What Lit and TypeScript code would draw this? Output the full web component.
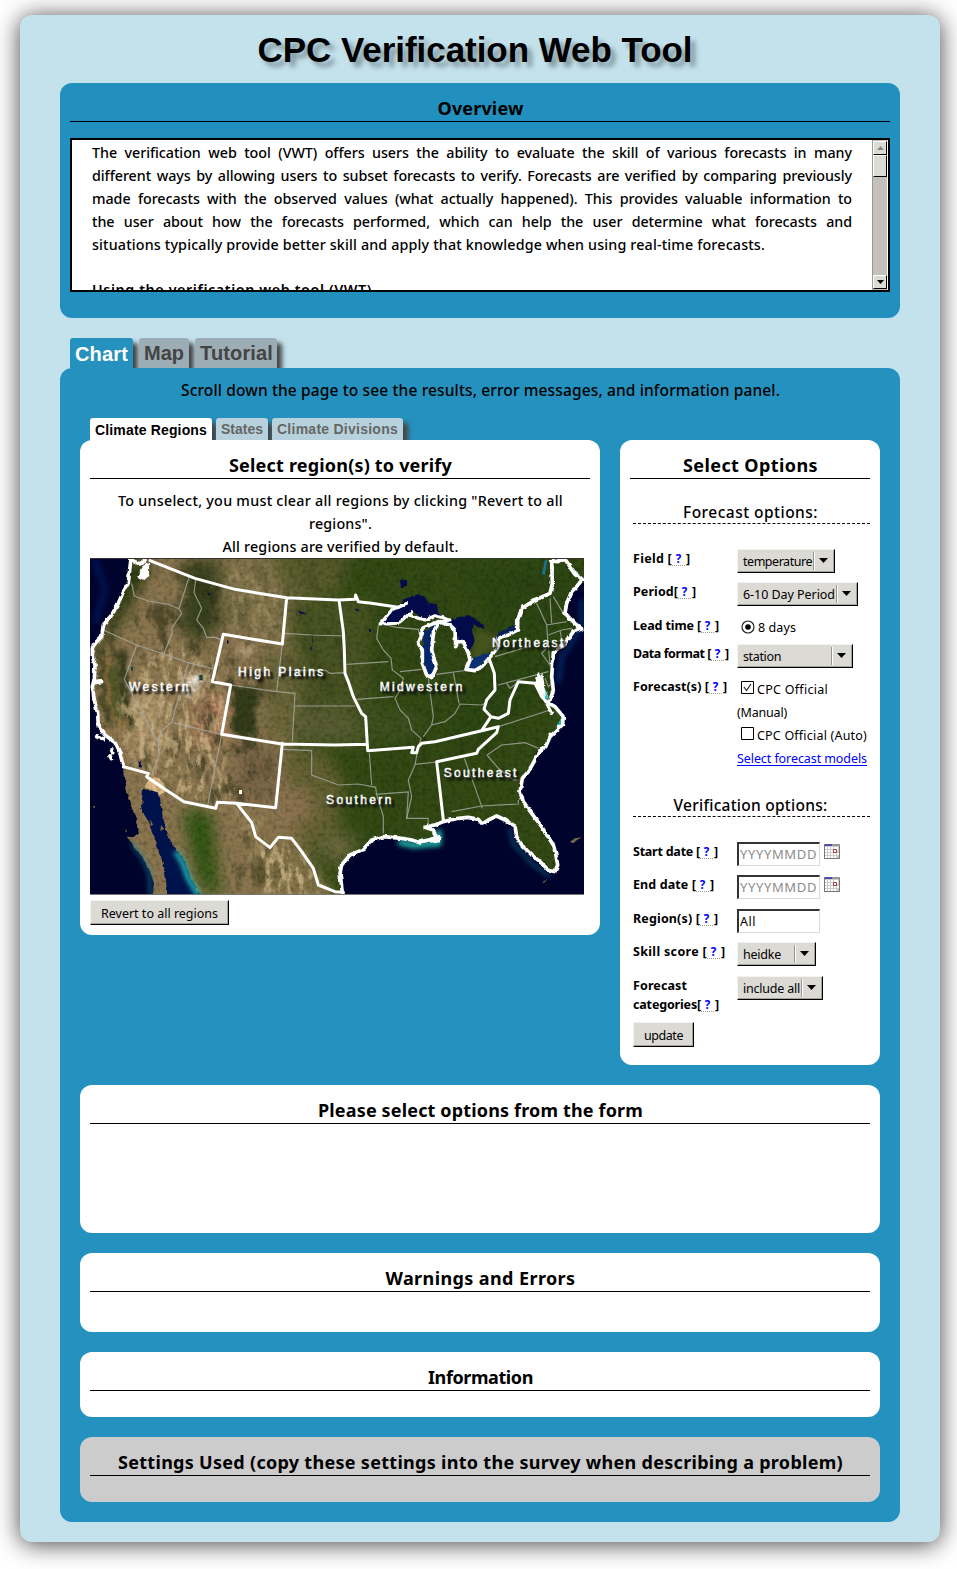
import { LitElement, html, svg, css } from "lit";
import { customElement, property } from "lit/decorators.js";

/** A single line of text whose tracking is adjusted to span a given width. */
@customElement("fit-text")
class FitText extends LitElement {
  @property({ type: Number }) w = 0;
  static styles = css`
    :host { display: inline-block; white-space: nowrap; font-variant-ligatures: none; text-align: left; }
    span { display: inline-block; }
  `;
  render() {
    return html`<span><slot></slot></span>`;
  }
  firstUpdated() {
    const span = this.renderRoot.querySelector("span") as HTMLElement;
    const n = (this.textContent || "").trim().length;
    const natural = span.getBoundingClientRect().width;
    if (n > 1 && this.w) this.style.letterSpacing = `${(this.w - natural) / n}px`;
  }
}

@customElement("panel-heading")
class PanelHeading extends LitElement {
  @property({ type: Number }) w = 0;
  @property() label = "";
  static styles = css`
    :host {
      display: block; height: 39px; line-height: 50px; border-bottom: 1px solid #000; padding-left: 1px;
      text-align: center; font-weight: 700; font-size: 18px;
    }
  `;
  render() {
    return html`<fit-text .w=${this.w}>${this.label}</fit-text>`;
  }
}

@customElement("drop-down")
class DropDown extends LitElement {
  @property() label = "";
  @property({ type: Number }) tw = 0;
  @property({ type: Number }) w = 0;
  static styles = css`
    :host { display: block; font-size: 12.500px; }
    .box {
      box-sizing: border-box; height: 24px; display: flex; align-items: center; padding-left: 5px;
      background: #dcdad5; border: 1px solid #f4f3f0; border-right: 1px solid #000; border-bottom: 1px solid #000;
      box-shadow: inset -1px -1px 0 #a5a29c;
    }
    .text { flex: 1; line-height: 22px; padding-top: 1px; }
    .sep { width: 1px; height: 18px; background: #99958e; border-right: 1px solid #fff; }
    svg { margin: 0 6px 2px 4px; display: block; }
  `;
  render() {
    return html`<div class="box" style="width:${this.w}px">
      <span class="text"><fit-text .w=${this.tw}>${this.label}</fit-text></span>
      <span class="sep"></span>
      <svg width="9" height="5" viewBox="0 0 9 5"><path d="M0 0h9L4.500 5z" /></svg>
    </div>`;
  }
}

@customElement("region-map")
class RegionMap extends LitElement {
  static styles = css`
    :host { display: block; height: 337px; }
    svg { display: block; color-interpolation-filters: sRGB; }
    filter, filter * { color-interpolation-filters: sRGB; }
    .label {
      font-family: "Liberation Sans", Arial, sans-serif; font-size: 36px; fill: #fff;
      stroke: #fff; stroke-width: 1.500; text-shadow: 3px 3px 2px #111;
    }
    .state { fill: none; stroke: #a9aaa4; stroke-width: 3.500; opacity: .8; }
    .region { fill: none; stroke: #fff; stroke-width: 9; stroke-linejoin: round; stroke-linecap: round; }
    .coast { fill: none; stroke: #fff; stroke-width: 11; stroke-linejoin: round; stroke-linecap: round; }
  `;
  render() {
    const pacific =
      "M0 0H138L134 60L130 100L115 125L100 160L80 195L55 225L50 260L35 275L22 292L22 320L30 345L28 385L22 410L28 450L38 490L40 530L60 555L90 578L105 610L115 650L122 695L128 745L150 795L165 850L152 862L125 860L160 905L190 950L207 1000L202 1040H0Z";
    const cortez =
      "M175 712L195 722L222 732L228 765L235 810L250 860L275 900L300 935L318 985L350 1040H247L240 960L225 915L205 850L185 805L168 770Z";
    const gulf =
      "M775 1040L772 1025L765 970L770 945L795 915L835 898L860 870L895 860L950 865L980 870L1000 877L1030 870L1065 865L1050 855L1045 840L1020 832L1050 825L1075 815L1095 810L1120 805L1150 802L1180 808L1192 822L1210 810L1235 798L1260 810L1290 828L1295 860L1310 885L1340 915L1365 935L1390 960L1410 965L1418 945L1412 910L1405 885L1370 830L1340 790L1315 755L1305 725L1312 685L1330 665L1350 630L1360 605L1382 590L1395 560L1432 525L1435 500L1410 470L1392 460L1405 420L1400 380L1405 310L1440 280L1465 245L1490 237L1470 220L1460 210L1440 190L1445 160L1460 125L1475 110L1510 85V1040Z";
    return html`<svg width="494" height="337" viewBox="15 24 1482 1011" preserveAspectRatio="none">
      <defs>
        <filter id="b20" x="-50%" y="-50%" width="200%" height="200%"><feGaussianBlur stdDeviation="24" /></filter>
        <filter id="b8" x="-50%" y="-50%" width="200%" height="200%"><feGaussianBlur stdDeviation="8" result="b" />
          <feTurbulence type="fractalNoise" baseFrequency=".03" numOctaves="4" seed="9" />
          <feDisplacementMap in="b" scale="35" xChannelSelector="R" yChannelSelector="G" /></filter>
        <filter id="glow" x="-50%" y="-50%" width="200%" height="200%"><feGaussianBlur stdDeviation="8" /></filter>
        <filter id="rough" x="-5%" y="-5%" width="110%" height="110%">
          <feTurbulence type="fractalNoise" baseFrequency=".035" numOctaves="3" seed="4" />
          <feDisplacementMap in="SourceGraphic" scale="14" xChannelSelector="R" yChannelSelector="G" />
        </filter>
        <filter id="jag" x="-5%" y="-5%" width="110%" height="110%">
          <feTurbulence type="fractalNoise" baseFrequency=".06" numOctaves="2" seed="8" />
          <feDisplacementMap in="SourceGraphic" scale="10" xChannelSelector="R" yChannelSelector="G" />
        </filter>
        <filter id="dark" x="-5%" y="-5%" width="110%" height="110%">
          <feGaussianBlur in="SourceGraphic" stdDeviation="18" result="s" />
          <feTurbulence type="fractalNoise" baseFrequency=".02 .013" numOctaves="6" seed="12" />
          <feColorMatrix values="0 0 0 0 .19  0 0 0 0 .2  0 0 0 0 .09  5 0 0 0 -2.500" />
          <feComposite in2="s" operator="in" />
        </filter>
        <filter id="light" x="-5%" y="-5%" width="110%" height="110%">
          <feGaussianBlur in="SourceGraphic" stdDeviation="18" result="s" />
          <feTurbulence type="fractalNoise" baseFrequency=".05 .02" numOctaves="5" seed="31" />
          <feColorMatrix values="0 0 0 0 .82  0 0 0 0 .72  0 0 0 0 .54  0 4.500 0 0 -2.100" />
          <feComposite in2="s" operator="in" />
        </filter>
        <filter id="grain" x="0" y="0" width="100%" height="100%">
          <feTurbulence type="fractalNoise" baseFrequency=".08" numOctaves="4" seed="5" />
          <feColorMatrix values="0 0 0 0 0  0 0 0 0 .04  0 0 0 0 0  0 2 0 0 -.85" />
        </filter>
        <clipPath id="frame"><rect x="15" y="24" width="1482" height="1008" /></clipPath>
      </defs>
      <g clip-path="url(#frame)">
        <rect width="1520" height="1060" fill="#334a14" />
        <g filter="url(#b20)">
          <path d="M-60 -60H580L620 300L620 600L700 1120H-60Z" fill="#8c7650" />
          <path d="M390 0L720 0L730 120L640 150L590 270L440 240L400 120Z" fill="#81734a" />
          <path d="M560 0L800 0L760 130L600 120Z" fill="#5a5d2d" />
          <path d="M610 140L860 150L850 480L640 470Z" fill="#4a5423" />
          <path d="M530 300L640 300L660 560L540 560Z" fill="#6c673a" />
          <path d="M640 470L800 480L840 580L640 580Z" fill="#5a5e33" />
          <path d="M600 600L720 600L780 700L760 860L700 900L600 820Z" fill="#646132" />
          <path d="M590 700L670 720L690 800L600 840Z" fill="#8d7350" />
          <path d="M490 820L640 870L760 1060L500 1060Z" fill="#857349" />
          <path d="M690 900L760 850L830 860L770 960Z" fill="#6c683e" />
          <path d="M120 30L210 40L160 120L90 240L60 300L40 290L60 220Z" fill="#24360d" />
          <path d="M290 40L400 20L410 230L340 280L280 240Z" fill="#3b431f" />
          <path d="M100 420L240 420L220 640L160 640Z" fill="#af956b" />
          <path d="M345 450L435 440L410 590L330 560Z" fill="#be8666" />
          <path d="M450 560L580 590L570 760L450 740Z" fill="#7b6548" />
          <path d="M290 780L380 780L410 1060L340 1000Z" fill="#2f5411" />
          <path d="M1150 60L1490 30V300L1200 600L1100 500L1250 300Z" fill="#2d4713" />
          <path d="M800 480L1000 480L1000 560L850 570Z" fill="#405220" />
        </g>
        <g fill="#fff">
          <path d="M280 60L420 30L420 240L380 400L280 340L80 320L60 250Z" filter="url(#dark)" opacity=".6" />
          <path d="M430 260L540 300L550 760L340 760L120 620L330 540Z" filter="url(#dark)" opacity=".65" />
          <path d="M400 850L520 850L640 1020L440 1020Z" filter="url(#dark)" opacity=".45" />
          <path d="M430 40H780L800 400L600 540L560 280L430 230Z" filter="url(#dark)" opacity=".25" />
          <path d="M850 60H1400L1300 700L900 750Z" filter="url(#dark)" opacity=".2" />
        </g>
        <g filter="url(#b8)">
          <path d="M65 310Q100 350 105 430T125 540L95 540Q55 450 55 350Z" fill="#8a6d3f" />
          <path d="M80 340Q92 420 102 510" fill="none" stroke="#3f5020" stroke-width="18" />
          <path d="M110 300Q110 400 138 530" fill="none" stroke="#333a1a" stroke-width="24" />
          <path d="M45 290L50 420L75 530" fill="none" stroke="#39401d" stroke-width="16" />
          <path d="M312 368L350 375L322 430L298 440Z" fill="#f0e8da" />
          <path d="M195 95L280 95L300 140L200 165Z" fill="#8a754f" />
          <path d="M465 280L510 290L500 320L455 310Z" fill="#b39d78" />
          <path d="M440 410L520 410L515 570L440 550Z" fill="#343c1a" />
        </g>
        <path d="M90 420L250 270L390 330L420 430L400 560L440 720L430 770L260 740L110 600Z" fill="#fff" filter="url(#light)" opacity=".7" />
        <path d="M500 870L640 900L730 1040H530Z" fill="#fff" filter="url(#light)" opacity=".8" />
        <path d="M420 40L620 120L590 270L430 240ZM430 760L560 820L490 900Z" fill="#fff" filter="url(#light)" opacity=".3" />
        <path d="M190 680L230 690L245 725L215 740L180 705Z" fill="#dfbd88" filter="url(#rough)" />
        <rect x="0" y="0" width="1520" height="1060" filter="url(#grain)" opacity=".28" />
        <path d="M1175 240L1215 250L1240 265L1215 300L1165 340L1165 290Z" fill="#4b5821" opacity=".8" filter="url(#glow)" />
        <g fill="#040b4a" filter="url(#rough)">
          <path d="M888 225L920 180L950 170L950 150L1000 133L1022 142L1030 162L1056 165L1060 190L1092 210L1050 200L1020 210L980 185L940 220Z" />
          <path d="M1015 245L1045 225L1062 222L1045 250L1042 300L1055 350L1040 380L1025 375L1015 300Z" fill="#06266b" />
          <path d="M1095 208L1150 195L1180 212L1200 235L1162 222L1165 280L1158 300L1153 322L1135 280L1115 270L1110 235L1075 215Z" />
          <path d="M1218 280L1240 250L1295 220L1300 240L1270 255L1240 270Z" fill="#062059" />
          <path d="M1145 355L1160 330L1215 305L1245 295L1210 325L1180 355L1150 360Z" fill="#093070" />
          <path d="M945 88l18 3v20l-15 4zM813 175l12 4-10 10zM845 240l10 0v8h-8z" />
          <path d="M640 184l8 10 14 2-2-4zM682 258l4 22-8 12 3 12 2-18zM365 125l8 3-3 10zM424 268l6 12-8 0zM160 628l12 24-10 0z" />
        </g>
        <path d="M1380 30h7l-8 45-8-4z" fill="#17749a" />
        <path d="M343 375h10v16h-10zM138 350h6v12h-6z" fill="#17443b" />
        <path d="M462 720h9v12h-9z" fill="#fff" />
        <g filter="url(#rough)">
          <path d=${pacific} fill="#00042d" />
          <path d=${cortez} fill="#00124b" />
          <path d=${gulf} fill="#00042d" />
        </g>
        <g fill="none" filter="url(#glow)">
          <path d="M140 878L170 920L193 965L198 1040" stroke="#1587a0" stroke-width="8" opacity=".8" />
          <path d="M272 905L293 938L310 985L342 1040" stroke="#28cfc6" stroke-width="13" />
          <path d="M940 876L985 886L1060 880L1062 840" stroke="#22b8ab" stroke-width="17" />
          <path d="M30 30L60 120L30 220" stroke="#001250" stroke-width="20" />
          <path d="M1490 150V230L1430 320L1420 400" stroke="#042d68" stroke-width="12" />
          <path d="M1275 835L1285 880L1340 940L1395 980" stroke="#0b5574" stroke-width="8" />
        </g>
        <path d="M196 806l8 18-6 4zM122 835l4 10-4 2zM228 825l10 12-12 6zM25 768h5v5h-5zM1455 875l15-10 20-3-15 9-10 9zM1372 997l15-10-10 12z" fill="#77694a" />
        <path class="state" d="M140 100L148 138L190 153L250 163L282 176M312 82L282 176L290 190L260 235L262 250L236 312M55 240L155 285L236 312L310 338L383 356M155 285L118 388L220 580L222 620L200 670M310 338L260 517L228 545L218 590M332 90L327 128L350 175L335 210L355 235L365 262L390 262L407 268M260 517L410 553L368 765M600 250L680 255L780 258M592 282L575 425M437 405L575 425L630 430L622 575M630 468H810M584 360L680 362L720 360L735 370L780 368M785 343L910 335M815 448L925 440M592 598L680 602V675L720 690L760 705L820 702L872 712L875 735L895 800L895 850M853 610L860 705M872 733L970 726L965 805H1030L1028 825" />
        <path class="state" d="M880 225L875 265L895 300L918 325L922 360L955 385L945 420L930 445L945 480L970 505L980 540L1008 565L1000 590L990 645L970 690L980 740L965 805M890 222L935 232L1000 238L1003 255M945 365L1010 358M1055 373L1150 360M1030 385L1045 500L1040 525L1015 560M1040 525L1080 515L1110 490L1125 462L1190 465L1200 460M1105 368L1122 460M990 643L1055 636M1138 625L1180 740L1192 775M1100 785L1190 768L1300 762L1300 750M1206 615L1240 655L1285 690L1310 690M1206 615L1250 585L1320 578L1360 595M1240 530L1395 480M1240 405L1390 365M1230 320L1330 290M1355 160L1385 225L1390 290L1395 345L1370 310L1385 295M1385 225L1445 215M1395 145L1400 220M1405 140L1435 190M1390 255L1430 240L1460 235M1425 240L1430 270M1265 400L1275 415L1300 395M1380 385L1390 410L1400 400" />
        <path class="region" d="M195 32L330 85L450 118L605 143L760 150L810 148L812 135L820 155L860 160L895 165L940 172M605 143L592 282L415 253L382 395L437 405L410 553L590 582L750 585L845 583M762 150L775 245L778 300L780 370L790 395L805 440L815 460L830 490L842 500L848 602L985 592L980 608H995L1000 590L1010 580L1050 575L1190 542L1240 530L1235 548L1180 598L1175 610L1055 635L1075 810M1190 542L1218 500L1197 478L1205 450L1230 420L1228 370L1212 325M1218 500L1240 505L1270 490L1275 450L1300 395L1350 400L1370 440L1390 460M115 650L190 670L185 680L240 718L297 755L392 775L397 757L455 760L572 773L592 580M455 760L500 818L512 860L555 893L580 862L620 865L650 905L685 955L700 1005L750 1025L775 1027" />
        <g filter="url(#jag)">
          <path class="coast" d="M138 26L134 60L130 100L115 125L100 160L80 195L55 225L50 260L35 275L22 292L22 320L30 345L28 385L22 410L28 450L38 490L40 530L60 555L90 578L105 610L115 650M142 32L165 42L180 30M28 398L50 395M35 560l20 6M80 600l3 8M75 618l4 8" />
          <path d="M180 38L192 42L193 78L175 92L155 84Z" fill="#fff" />
          <path class="coast" d="M775 1040L772 1025L765 970L770 945L795 915L835 898L860 870L895 860L950 865L980 870L1000 877L1030 870L1065 865L1050 855L1045 840L1020 832L1050 825L1075 815L1095 810L1120 805L1150 802L1180 808L1192 822L1210 810L1235 798L1260 810L1290 828L1295 860L1310 885L1340 915L1365 935L1390 960L1410 965L1418 945L1412 910L1405 885L1370 830L1340 790L1315 755L1305 725L1312 685L1330 665L1350 630L1360 605L1382 590L1395 560L1432 525L1435 500L1410 470L1392 460L1405 420L1400 380L1405 310L1440 280L1465 245L1490 237L1470 220L1460 210L1440 190L1445 160L1460 125L1475 110L1492 88L1470 70L1440 28L1415 35L1400 32L1402 100L1395 130L1350 150L1310 175L1298 210L1298 240L1270 255L1240 265L1240 290L1212 325L1190 350L1170 362L1143 358L1155 330L1150 310L1135 275L1120 275L1112 290L1110 240L1095 225L1060 215L1045 250L1040 300L1055 350L1040 383L1025 375L1012 340L1012 300L1000 280L1012 250L1010 235L1060 215" />
          <path class="region" d="M965 160L920 180L885 222L940 220L980 185L975 197L1020 210L1050 197L1095 210L1060 215M1360 375L1372 410L1385 440M1355 385L1370 430L1400 490" />
          <path d="M1035 862L1065 855L1065 878L1040 874ZM1350 400L1372 370L1378 400L1375 435L1360 420Z" fill="#fff" />
          <path d="M1378 415l12 30-5 6zM1415 530l15-30-4 25-20 8z" fill="#28b9b9" />
        </g>
        ${[
          ["Western", 132, 422, 178],
          ["High Plains", 459, 377, 256],
          ["Midwestern", 884, 423, 248],
          ["Northeast", 1221, 291, 214],
          ["Southeast", 1076, 682, 218],
          ["Southern", 723, 761, 196],
        ].map(([t, x, y, w]) => svg`<text class="label" x=${x} y=${y} textLength=${w}>${t}</text>`)}
      </g>
      <path d="M15 25.500H1497" stroke="#333" stroke-width="3" />
      <path d="M15 1033.500H1497" stroke="#777" stroke-width="3" />
    </svg>`;
  }
}

@customElement("app-root")
class AppRoot extends LitElement {
  static styles = css`
    :host { display: block; height: 1569px; box-sizing: border-box; padding: 15px 17px 0 20px; background: #fff; color: #000;
      font-family: "Noto Sans", "Open Sans", sans-serif; overflow: hidden; }
    * { box-sizing: border-box; }
    .page { height: 1527px; background: #c3e2ec; border-radius: 12px; box-shadow: 0 2px 24px rgba(0,0,0,.75); padding: 0 40px; }
    h1 { margin: 0; height: 68px; text-align: center; font: bold 35px/70px "Liberation Sans", Arial, sans-serif;
      text-shadow: 5px 5px 5px rgba(0,0,0,.35); padding-right: 10px; }
    .overview { background: #2190be; border-radius: 12px; height: 235px; padding: 0 10px; }
    .scroll { margin-top: 16px; height: 154px; border: 2px solid #000; background: #fff; display: flex; overflow: hidden; }
    .prose { flex: 1; padding: 1px 20px 0; font-size: 14.300px; line-height: 23px; font-weight: 500; overflow: hidden; height: 150px; }
    .line { height: 23px; text-align: justify; text-align-last: justify; white-space: nowrap; letter-spacing: -.05px; }
    .subhead { margin-top: 22px; font-weight: 600; }
    .bar { width: 16px; background: #c4c1ba; border-left: 1px solid #999; border-right: 1px solid #fff; display: flex; flex-direction: column; padding: 1px 0; }
    .btn { height: 14px; background: #dcdad5; border: 1px solid #fff; border-right-color: #000; border-bottom-color: #000;
      display: flex; align-items: center; justify-content: center; }
    .thumb { height: 22px; flex: none; }
    .spacer { flex: 1; }
    .tabs { display: flex; gap: 6px; padding-left: 10px; height: 50px; padding-top: 20px; font: bold 20px/30px "Liberation Sans", Arial, sans-serif; }
    .tab { height: 30px; border-radius: 3px 3px 0 0; padding-left: 5px; background: #9cadb5; color: #444; box-shadow: 5px 5px 5px #444; clip-path: inset(0 -12px 0 0); }
    .tab.on { background: #2591be; color: #fff; line-height: 32px; }
    .main { background: #2591be; border-radius: 12px; height: 1154px; padding: 0 20px; }
    .hint { height: 50px; line-height: 45px; text-align: center; font-size: 15.500px; font-weight: 500; padding-left: 1px; }
    .subtabs { display: flex; gap: 4px; padding-left: 10px; height: 22px; font: bold 14px/22px "Liberation Sans", Arial, sans-serif; }
    .sub { border-radius: 3px 3px 0 0; padding-left: 5px; background: #b7d2dc; color: #666; box-shadow: 5px 5px 5px #444; clip-path: inset(0 -12px 0 0); }
    .sub.on { background: #fff; color: #000; line-height: 24px; }
    .w63 { width: 63px; } .w50 { width: 50px; } .w82 { width: 82px; }
    .w122 { width: 122px; } .w52 { width: 52px; } .w131 { width: 131px; }
    .cols { display: flex; gap: 20px; align-items: flex-start; }
    .card { background: #fff; border-radius: 12px; padding: 0 10px; }
    .region { width: 520px; height: 495px; }
    .note { margin-top: 10px; height: 69px; padding-left: 1px; text-align: center; font-size: 14.300px; line-height: 23px; font-weight: 500; }
    .push { display: inline-flex; height: 25px; justify-content: center; align-items: center; font-size: 12.500px; background: #dcdad5;
      border: 1px solid #f4f3f0; border-right-color: #000; border-bottom-color: #000; box-shadow: inset -1px -1px 0 #a5a29c; padding-top: 1px; }
    .revert { width: 139px; margin-top: 5px; }
    .options { width: 260px; height: 625px; }
    .group { margin-left: 3px; height: 45px; border-bottom: 1px dashed #000; text-align: center; line-height: 66px; font-size: 15.500px; font-weight: 500; }
    .group fit-text { margin-right: 2px; }
    .second { height: 39px; line-height: 55px; margin-top: 7px; }
    .rows { display: grid; grid-template-columns: 104px 1fr; margin-left: 3px; padding-top: 25px; font-size: 12.500px; }
    .first { grid-template-rows: 33px 34px 28px 33px 94px; }
    .last { grid-template-rows: 33px 34px 33px 34px 46px; }
    .rows b { font-size: 12.500px; line-height: 19px; font-weight: 700; white-space: nowrap; }
    .help { display: inline-block; width: 13px; text-align: center; color: #00f; height: 17px; line-height: 19px; border-bottom: 1px dotted #999; margin: 0 1px 0 0; font-size: 11.500px; vertical-align: top; }
    .radio { display: flex; align-items: center; height: 23px; padding-left: 4px; gap: 3px; }
    .radio svg { margin-bottom: 2px; }
    .checks { line-height: 23px; padding-top: 1px; }
    .check { display: flex; align-items: center; height: 23px; padding-left: 4px; gap: 3px; }
    .check svg { margin-bottom: 5px; }
    .checks .plain { height: 23px; }
    .link { color: #00f; display: inline-block; height: 19px; line-height: 23px; border-bottom: 1px solid #00f; vertical-align: top; }
    .date { display: flex; gap: 4px; align-items: flex-start; }
    .date svg { margin-top: 1px; }
    .input { width: 83px; height: 24px; border: 1px solid #dcdad5; border-left: 2px solid #333; border-top: 2px solid #333; padding: 0 0 0 1px; line-height: 21px; }
    .ph { color: #8c8c8c; font-size: 13px; }
    .update { width: 61px; margin-left: 3px; height: 25px; }
    .results { height: 148px; margin-top: 20px; }
    .warn { height: 79px; margin-top: 20px; }
    .short { height: 65px; margin-top: 20px; }
    .grey { background: #ccc; }
  `;

  private label(text: string, w: number) {
    return html`<b><fit-text .w=${w}>${text}</fit-text><span class="help">?</span>]</b>`;
  }
  private calendar() {
    return html`<svg width="16" height="16" viewBox="0 0 16 16">
      <path d="M0 1H16V16H0Z" fill="#ccc" /><path d="M0 1H16V3H0Z" fill="#999" /><path d="M1 1H8V3H1Z" fill="#4a4ab0" />
      <g fill="#fff"><path d="M1 4h2v2H1zM4 4h2v2H4zM7 4h2v2H7zM10 4h4v4h-4zM1 7h2v2H1zM4 7h2v2H4zM7 7h2v2H7zM1 10h2v2H1zM4 10h2v2H4zM7 10h2v2H7zM10 10h2v2h-2zM13 10h2v2h-2zM1 13h2v2H1zM4 13h2v2H4zM7 13h2v2H7zM10 13h2v2h-2z" /></g>
      <path d="M9.500 6.500h3v3h-3z" fill="#fff" stroke="#a33a45" /><path d="M.5 1V15.500H15.500V3" fill="none" stroke="#777" />
    </svg>`;
  }

  render() {
    return html`<div class="page">
      <h1><fit-text .w=${435}>CPC Verification Web Tool</fit-text></h1>
      <section class="overview">
        <panel-heading label="Overview" .w=${86}></panel-heading>
        <div class="scroll">
          <div class="prose">
            <div class="line">The verification web tool (VWT) offers users the ability to evaluate the skill of various forecasts in many</div>
            <div class="line">different ways by allowing users to subset forecasts to verify. Forecasts are verified by comparing previously</div>
            <div class="line">made forecasts with the observed values (what actually happened). This provides valuable information to</div>
            <div class="line">the user about how the forecasts performed, which can help the user determine what forecasts and</div>
            <div><fit-text .w=${673}>situations typically provide better skill and apply that knowledge when using real-time forecasts.</fit-text></div>
            <div class="subhead"><fit-text .w=${280}>Using the verification web tool (VWT)</fit-text></div>
          </div>
          <div class="bar">
            <div class="btn"><svg width="7" height="4"><path d="M0 4H7L3.500 0z" fill="#888" /></svg></div>
            <div class="btn thumb"></div>
            <div class="spacer"></div>
            <div class="btn"><svg width="7" height="4"><path d="M0 0H7L3.500 4z" /></svg></div>
          </div>
        </div>
      </section>
      <nav class="tabs">
        <div class="tab on w63"><fit-text .w=${53}>Chart</fit-text></div>
        <div class="tab w50"><fit-text .w=${40}>Map</fit-text></div>
        <div class="tab w82"><fit-text .w=${73}>Tutorial</fit-text></div>
      </nav>
      <main class="main">
        <div class="hint"><fit-text .w=${599}>Scroll down the page to see the results, error messages, and information panel.</fit-text></div>
        <nav class="subtabs">
          <div class="sub on w122"><fit-text .w=${112}>Climate Regions</fit-text></div>
          <div class="sub w52"><fit-text .w=${42}>States</fit-text></div>
          <div class="sub w131"><fit-text .w=${121}>Climate Divisions</fit-text></div>
        </nav>
        <div class="cols">
          <section class="card region">
            <panel-heading label="Select region(s) to verify" .w=${223}></panel-heading>
            <div class="note">
              <fit-text .w=${445}>To unselect, you must clear all regions by clicking "Revert to all</fit-text><br />
              <fit-text .w=${63}>regions".</fit-text><br />
              <fit-text .w=${236}>All regions are verified by default.</fit-text>
            </div>
            <region-map></region-map>
            <span class="push revert"><fit-text .w=${117}>Revert to all regions</fit-text></span>
          </section>
          <section class="card options">
            <panel-heading label="Select Options" .w=${135}></panel-heading>
            <div class="group"><fit-text .w=${135}>Forecast options:</fit-text></div>
            <div class="rows first">
              ${this.label("Field [", 39)}<drop-down label="temperature" .tw=${69} .w=${98}></drop-down>
              ${this.label("Period[", 45)}<drop-down label="6-10 Day Period" .tw=${92} .w=${121}></drop-down>
              ${this.label("Lead time [", 68)}
              <div class="radio">
                <svg width="14" height="14"><circle cx="7" cy="7" r="6" fill="#fff" stroke="#222" stroke-width="1.200" /><circle cx="7" cy="7" r="2.800" /></svg>
                <fit-text .w=${38}>8 days</fit-text>
              </div>
              ${this.label("Data format [", 78)}<drop-down label="station" .tw=${38} .w=${116}></drop-down>
              ${this.label("Forecast(s) [", 76)}
              <div class="checks">
                <div class="check">
                  <svg width="13" height="13"><path d="M.5.5h12v12H.5z" fill="#fff" stroke="#000" /><path d="M3 6l2.500 3.500L10 3" fill="none" stroke="#222" stroke-width="1.200" /></svg>
                  <fit-text .w=${71}>CPC Official</fit-text>
                </div>
                <div class="plain"><fit-text .w=${50}>(Manual)</fit-text></div>
                <div class="check">
                  <svg width="13" height="13"><path d="M.5.5h12v12H.5z" fill="#fff" stroke="#000" /></svg>
                  <fit-text .w=${110}>CPC Official (Auto)</fit-text>
                </div>
                <div class="plain"><a class="link"><fit-text .w=${130}>Select forecast models</fit-text></a></div>
              </div>
            </div>
            <div class="group second"><fit-text .w=${154}>Verification options:</fit-text></div>
            <div class="rows last">
              ${this.label("Start date [", 67)}
              <div class="date"><div class="input ph"><fit-text .w=${77}>YYYYMMDD</fit-text></div>${this.calendar()}</div>
              ${this.label("End date [", 63)}
              <div class="date"><div class="input ph"><fit-text .w=${77}>YYYYMMDD</fit-text></div>${this.calendar()}</div>
              ${this.label("Region(s) [", 67)}
              <div class="input"><fit-text .w=${16}>All</fit-text></div>
              ${this.label("Skill score [", 74)}<drop-down label="heidke" .tw=${38} .w=${79}></drop-down>
              <b><fit-text .w=${54}>Forecast</fit-text><br />${this.label("categories[", 68)}</b>
              <drop-down label="include all" .tw=${57} .w=${86}></drop-down>
            </div>
            <span class="push update"><fit-text .w=${39}>update</fit-text></span>
          </section>
        </div>
        <section class="card results"><panel-heading label="Please select options from the form" .w=${325}></panel-heading></section>
        <section class="card warn"><panel-heading label="Warnings and Errors" .w=${190}></panel-heading></section>
        <section class="card short"><panel-heading label="Information" .w=${105}></panel-heading></section>
        <section class="card short grey"><panel-heading label="Settings Used (copy these settings into the survey when describing a problem)" .w=${725}></panel-heading></section>
      </main>
    </div>`;
  }
}
